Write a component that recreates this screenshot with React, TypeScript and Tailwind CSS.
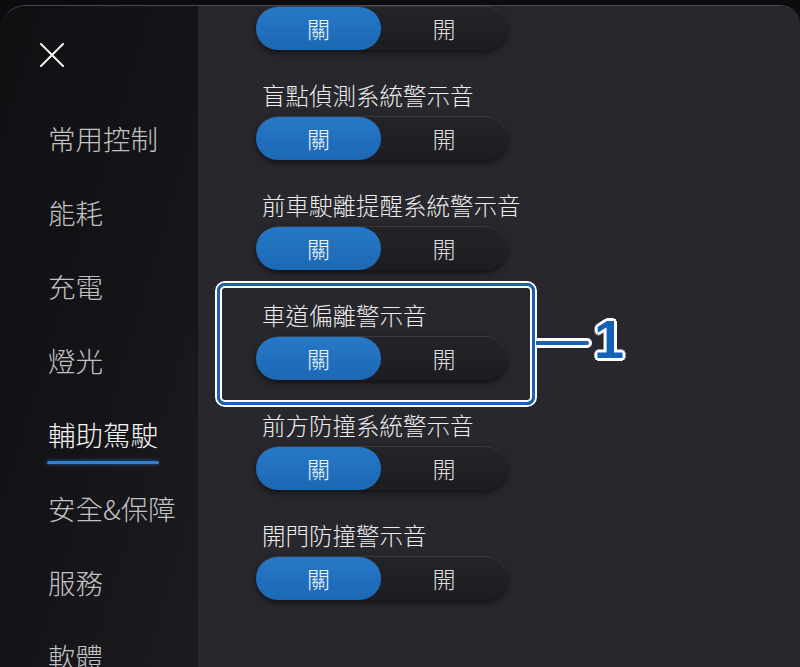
import React from 'react';

const menu = ['常用控制', '能耗', '充電', '燈光', '輔助駕駛', '安全&保障', '服務', '軟體'];

const alerts = [
  '後方交通警示系統警示音',
  '盲點偵測系統警示音',
  '前車駛離提醒系統警示音',
  '車道偏離警示音',
  '前方防撞系統警示音',
  '開門防撞警示音',
];

const Toggle = () => (
  <div className="flex h-[44px] w-[251px] rounded-full border-t border-[#3a3a42] bg-gradient-to-b from-[#232328] to-[#1c1c21] shadow-[0_3px_6px_rgba(0,0,0,0.55)]">
    <div className="flex h-full w-[125px] items-center justify-center rounded-full bg-gradient-to-b from-[#2679c8] to-[#1c68b4] text-[23px] font-light text-[#eef3fb]">
      關
    </div>
    <div className="flex flex-1 items-center justify-center text-[23px] font-light text-[#dedede]">開</div>
  </div>
);

const Callout = () => (
  <>
    <div className="absolute left-[-41px] top-[-19px] h-[126px] w-[322px] rounded-[10px] border-2 border-white">
      <div className="h-full w-full rounded-[8px] border-[3px] border-[#1a63b3]">
        <div className="h-full w-full rounded-[5px] border-2 border-white" />
      </div>
    </div>
    <div className="absolute left-[280px] top-[38px] flex h-[10px] w-[56px] items-center rounded-r-full bg-white pr-[3px]">
      <div className="h-[4px] w-full rounded-r-full bg-[#1a63b3]" />
    </div>
    <span className="absolute left-[338px] top-[12px] font-['Liberation_Sans',sans-serif] text-[54px] font-bold leading-none text-[#1462b8] [text-shadow:3px_0_0_#fff,-3px_0_0_#fff,0_3px_0_#fff,0_-3px_0_#fff,2px_2px_0_#fff,-2px_2px_0_#fff,2px_-2px_0_#fff,-2px_-2px_0_#fff]">
      1
    </span>
  </>
);

const App = () => {
  return (
    <main className="h-[667px] w-[800px] overflow-hidden bg-[#0c0c0e] pt-[5px] font-['Noto_Sans_CJK_TC','Noto_Sans',sans-serif]">
      <div className="flex h-[662px] overflow-hidden rounded-tl-[26px] rounded-tr-[20px] border-t border-[#4a4a52]">
        {/* side menu */}
        <aside className="w-[198px] shrink-0 bg-gradient-to-br from-[#101013] via-[#141418] to-[#1b1b20]">
          <div className="flex h-[96px] items-start pl-[40px] pt-[37px]">
            <svg width="24" height="24" viewBox="0 0 24 24">
              <path d="M1 1L23 23M23 1L1 23" stroke="#f4f4f4" strokeWidth="2" strokeLinecap="round" />
            </svg>
          </div>
          <nav className="flex flex-col">
            {menu.map((item) => {
              const active = item === '輔助駕駛';
              return (
                <div key={item} className="flex h-[74px] items-center pl-[48px]">
                  <span
                    className={`relative text-[27.5px] font-light leading-none ${active ? 'text-[#f4f4f4]' : 'text-[#c2c2c4]'}`}
                  >
                    {item}
                    {active && (
                      <span className="absolute -left-[1px] -right-[1px] top-[40px] h-[3px] rounded-full bg-[#2f80d6] shadow-[0_0_4px_rgba(47,128,214,0.7)]" />
                    )}
                  </span>
                </div>
              );
            })}
          </nav>
        </aside>

        {/* alert sounds */}
        <section className="flex-1 bg-[#27272d] pl-[58px]">
          <div className="mt-[-36px] flex flex-col">
            {alerts.map((label, i) => (
              <div key={label} className="relative flex h-[110px] flex-col">
                <div className="h-[30px] pl-[6px] text-[23.5px] font-light leading-[30px] text-[#ececec]">{label}</div>
                <div className="mt-[6px]">
                  <Toggle />
                </div>
                {i === 3 && <Callout />}
              </div>
            ))}
          </div>
        </section>
      </div>
    </main>
  );
};

export default App;
